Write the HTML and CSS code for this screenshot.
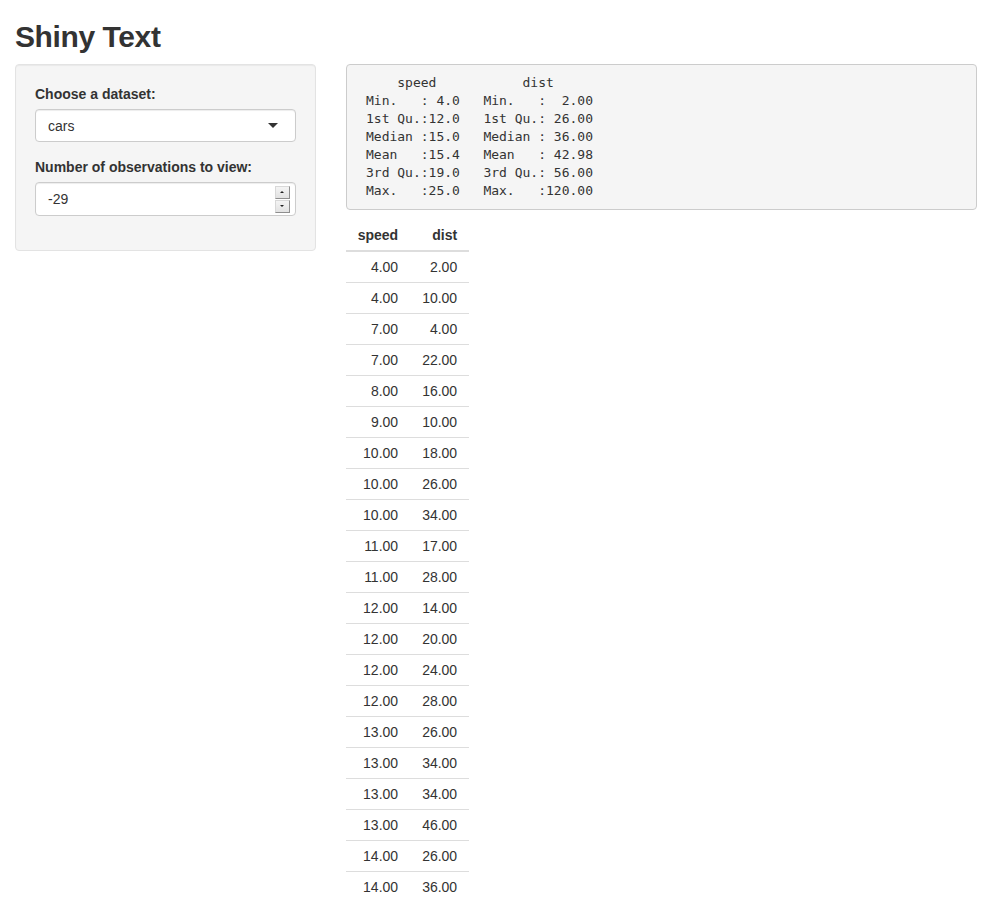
FILE: index.html
```html
<!DOCTYPE html>
<html>
<head>
<meta charset="utf-8">
<title>Shiny Text</title>
<link rel="stylesheet" href="styles.css">
</head>
<body>
<div class="container">
  <h2 class="title">Shiny Text</h2>
  <div class="row">
    <div class="col-side">
      <div class="well">
        <div class="form-group">
          <label class="label">Choose a dataset:</label>
          <div class="select">
            <span class="select-value">cars</span>
            <span class="caret"></span>
          </div>
        </div>
        <div class="form-group">
          <label class="label">Number of observations to view:</label>
          <div class="number">
            <span class="number-value">-29</span>
            <span class="spinner">
              <span class="spin-btn"><span class="arrow-up"></span></span>
              <span class="spin-btn"><span class="arrow-down"></span></span>
            </span>
          </div>
        </div>
      </div>
    </div>
    <div class="col-main">
<pre class="summary">     speed           dist       
 Min.   : 4.0   Min.   :  2.00  
 1st Qu.:12.0   1st Qu.: 26.00  
 Median :15.0   Median : 36.00  
 Mean   :15.4   Mean   : 42.98  
 3rd Qu.:19.0   3rd Qu.: 56.00  
 Max.   :25.0   Max.   :120.00  </pre>
      <table class="data">
        <thead>
          <tr><th>speed</th><th>dist</th></tr>
        </thead>
        <tbody>
          <tr><td>4.00</td><td>2.00</td></tr>
          <tr><td>4.00</td><td>10.00</td></tr>
          <tr><td>7.00</td><td>4.00</td></tr>
          <tr><td>7.00</td><td>22.00</td></tr>
          <tr><td>8.00</td><td>16.00</td></tr>
          <tr><td>9.00</td><td>10.00</td></tr>
          <tr><td>10.00</td><td>18.00</td></tr>
          <tr><td>10.00</td><td>26.00</td></tr>
          <tr><td>10.00</td><td>34.00</td></tr>
          <tr><td>11.00</td><td>17.00</td></tr>
          <tr><td>11.00</td><td>28.00</td></tr>
          <tr><td>12.00</td><td>14.00</td></tr>
          <tr><td>12.00</td><td>20.00</td></tr>
          <tr><td>12.00</td><td>24.00</td></tr>
          <tr><td>12.00</td><td>28.00</td></tr>
          <tr><td>13.00</td><td>26.00</td></tr>
          <tr><td>13.00</td><td>34.00</td></tr>
          <tr><td>13.00</td><td>34.00</td></tr>
          <tr><td>13.00</td><td>46.00</td></tr>
          <tr><td>14.00</td><td>26.00</td></tr>
          <tr><td>14.00</td><td>36.00</td></tr>
        </tbody>
      </table>
    </div>
  </div>
</div>
</body>
</html>
```

FILE: styles.css
```css
* {
  box-sizing: border-box;
}

html, body {
  margin: 0;
  padding: 0;
  background: #ffffff;
}

body {
  font-family: "Liberation Sans", Arial, sans-serif;
  font-size: 14px;
  line-height: 20px;
  color: #333333;
}

.container {
  padding: 0 15px;
}

.title {
  font-size: 30px;
  font-weight: bold;
  letter-spacing: -0.4px;
  line-height: 33px;
  margin: 20px 0 11px 0;
  color: #333333;
}

.row {
  display: flex;
  margin: 0 -15px;
  align-items: flex-start;
}

.col-side {
  width: 33.3333%;
  padding: 0 15px;
}

.col-main {
  width: 66.6667%;
  padding: 0 15px;
}

.well {
  background: #f5f5f5;
  border: 1px solid #e3e3e3;
  border-radius: 4px;
  box-shadow: inset 0 1px 1px rgba(0, 0, 0, 0.05);
  padding: 19px;
  margin-bottom: 20px;
}

.form-group {
  margin-bottom: 15px;
}

.label {
  display: block;
  font-weight: bold;
  margin-bottom: 5px;
}

.select {
  display: flex;
  align-items: center;
  height: 33px;
  padding: 6px 12px;
  background: #ffffff;
  border: 1px solid #cccccc;
  border-radius: 4px;
  box-shadow: inset 0 1px 1px rgba(0, 0, 0, 0.075);
}

.select-value {
  flex: 1;
}

.caret {
  width: 0;
  height: 0;
  border-style: solid;
  border-width: 5px 5px 0 5px;
  border-color: #333333 transparent transparent transparent;
  margin-right: 5px;
}

.number {
  display: flex;
  align-items: center;
  height: 34px;
  padding: 0 5px 0 12px;
  background: #ffffff;
  border: 1px solid #cccccc;
  border-radius: 4px;
  box-shadow: inset 0 1px 1px rgba(0, 0, 0, 0.075);
}

.number-value {
  flex: 1;
}

.spinner {
  display: flex;
  flex-direction: column;
  width: 15px;
  height: 27px;
}

.spin-btn {
  flex: 1;
  display: flex;
  align-items: center;
  justify-content: center;
  background: linear-gradient(#f4f4f4, #e2e2e2);
  border: 1px solid #b5b5b5;
  border-top-color: #d8d8d8;
  border-left-color: #d8d8d8;
  border-right-color: #8e8e8e;
  border-bottom-color: #8e8e8e;
}

.spin-btn + .spin-btn {
  margin-top: 1px;
}

.arrow-up {
  width: 0;
  height: 0;
  border-style: solid;
  border-width: 0 2px 2px 2px;
  border-color: transparent transparent #222222 transparent;
}

.arrow-down {
  width: 0;
  height: 0;
  border-style: solid;
  border-width: 2px 2px 0 2px;
  border-color: #222222 transparent transparent transparent;
}

.summary {
  font-family: "DejaVu Sans Mono", Menlo, monospace;
  font-size: 13px;
  line-height: 18px;
  color: #333333;
  background: #f5f5f5;
  border: 1px solid #cccccc;
  border-radius: 4px;
  padding: 8.5px 9.5px 9.5px 11.5px;
  margin: 0 0 10px 0;
  white-space: pre;
  overflow: hidden;
}

.data {
  border-collapse: collapse;
  border-spacing: 0;
}

.data th,
.data td {
  text-align: right;
  padding: 5px 12px;
  line-height: 20px;
}

.data th {
  font-weight: bold;
  border-bottom: 2px solid #dddddd;
}

.data td {
  border-top: 1px solid #dddddd;
}
```
